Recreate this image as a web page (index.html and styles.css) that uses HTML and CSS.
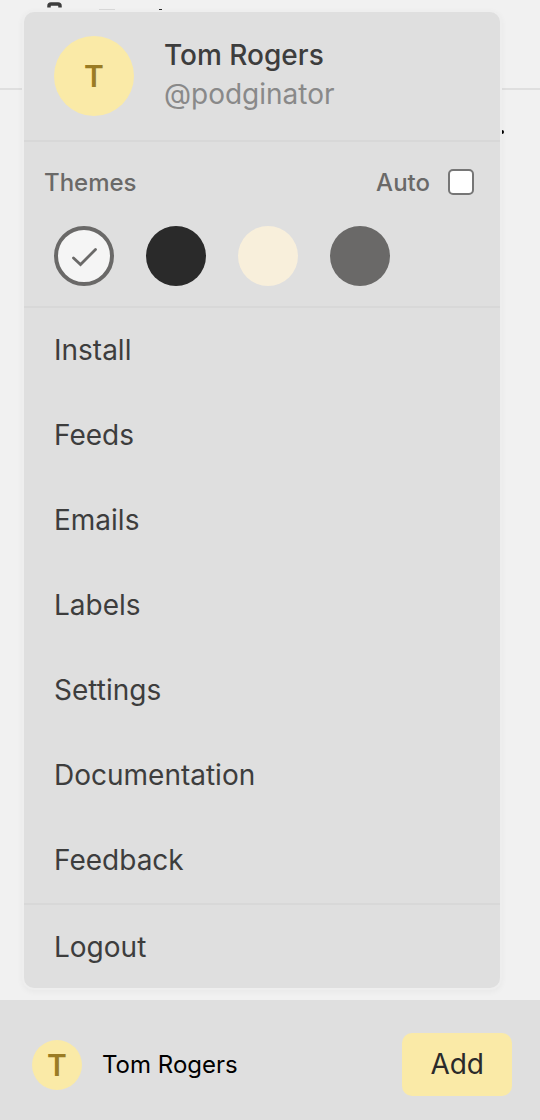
FILE: index.html
```html
<!DOCTYPE html>
<html lang="en">
<head>
<meta charset="utf-8">
<meta name="viewport" content="width=device-width, initial-scale=1">
<title>Account menu</title>
<link rel="stylesheet" href="styles.css">
</head>
<body>
<header class="topbar">
  <svg class="topbar-art" width="140" height="24" viewBox="0 0 140 24" aria-hidden="true">
    <path d="M2 7.500V6Q2 4 4 4H11Q13 4 13 6V7.500" fill="none" stroke="#3d3d3d" stroke-width="3.500"/>
    <path d="M52 9.500H68" stroke="#d9d9d9"/>
    <path d="M112 9.500H115" stroke="#2a2a2a"/>
  </svg>
</header>
<main class="content">
  <svg class="content-mark" width="6" height="6" viewBox="0 0 6 6" aria-hidden="true"><circle cx="3" cy="3" r="2" fill="#000"/></svg>
</main>

<section class="menu" aria-label="Account menu">
  <div class="profile">
    <span class="avatar avatar-large" aria-hidden="true">T</span>
    <div class="identity">
      <div class="name">Tom Rogers</div>
      <div class="handle">@podginator</div>
    </div>
  </div>
  <div class="themes">
    <div class="themes-head">
      <span>Themes</span>
      <label class="auto" for="auto">Auto <input class="auto-box" type="checkbox" id="auto"></label>
    </div>
    <div class="swatches">
      <button class="swatch swatch-light" type="button" aria-label="Light" aria-pressed="true">
        <svg width="28" height="28" viewBox="0 0 28 28" aria-hidden="true"><path d="M3.500 16L10.500 22.500L25.500 7.500" fill="none" stroke="#6a6968" stroke-width="2.800" stroke-linecap="round"/></svg>
      </button>
      <button class="swatch swatch-dark" type="button" aria-label="Dark"></button>
      <button class="swatch swatch-sepia" type="button" aria-label="Sepia"></button>
      <button class="swatch swatch-gray" type="button" aria-label="Gray"></button>
    </div>
  </div>
  <nav class="links">
    <a class="link" href="#install">Install</a>
    <a class="link" href="#feeds">Feeds</a>
    <a class="link" href="#emails">Emails</a>
    <a class="link" href="#labels">Labels</a>
    <a class="link" href="#settings">Settings</a>
    <a class="link" href="#documentation">Documentation</a>
    <a class="link" href="#feedback">Feedback</a>
  </nav>
  <button class="link logout" type="button">Logout</button>
</section>

<footer class="footer">
  <button class="account" type="button">
    <span class="avatar avatar-small" aria-hidden="true">T</span>
    <span>Tom Rogers</span>
  </button>
  <button class="add" type="button">Add</button>
</footer>
</body>
</html>
```
FILE: styles.css
```css
* {
  box-sizing: border-box;
}

body {
  position: relative;
  display: flex;
  flex-direction: column;
  min-height: 100vh;
  margin: 0;
  background: #f1f1f1;
  color: #3d3d3d;
  font-family: Inter, "Liberation Sans", sans-serif;
}

button {
  padding: 0;
  border: 0;
  background: none;
  color: inherit;
  font: inherit;
  cursor: pointer;
}

.topbar {
  height: 90px;
  padding-left: 47px;
  border-bottom: 2px solid #dfdfdf;
}

.topbar-art {
  display: block;
}

.content {
  display: flex;
  flex: 1;
  justify-content: flex-end;
  min-height: 910px;
  padding: 39px 35px 0;
}

.menu {
  position: absolute;
  top: 10px;
  right: 38px;
  left: 22px;
  border: 2px solid #eeeeee;
  border-radius: 12px;
  background: #dfdfdf;
  box-shadow: 0 2px 6px rgba(0, 0, 0, 0.04);
}

.profile {
  display: flex;
  align-items: center;
  gap: 30px;
  padding: 24px 30px;
  border-bottom: 2px solid #d8d8d8;
}

.avatar {
  display: flex;
  flex: none;
  align-items: center;
  justify-content: center;
  border-radius: 50%;
  background: #faeaa7;
  color: #9a7c24;
  font-size: 30px;
  font-weight: 600;
}

.avatar-large {
  width: 80px;
  height: 80px;
}

.avatar-small {
  width: 50px;
  height: 50px;
}

.identity {
  padding-bottom: 2px;
  font-size: 28px;
  line-height: 40px;
}

.profile .identity {
  line-height: 39px;
}

.name {
  font-weight: 500;
}

.handle {
  color: #898989;
}

.themes {
  padding: 27px 26px 20px 20px;
  border-bottom: 2px solid #d8d8d8;
}

.themes-head {
  display: flex;
  align-items: center;
  justify-content: space-between;
  color: #6a6968;
  font-size: 24px;
  font-weight: 500;
  line-height: 28px;
}

.auto {
  display: flex;
  align-items: center;
  gap: 18px;
}

.auto-box {
  width: 26px;
  height: 26px;
  margin: 0 0 2px;
  border: 2px solid #767676;
  border-radius: 5px;
  background: #fff;
  appearance: none;
}

.auto-box:checked {
  background: #6a6968;
}

.swatches {
  display: flex;
  gap: 32px;
  padding: 29px 10px 0;
}

.swatch {
  display: flex;
  align-items: center;
  justify-content: center;
  width: 60px;
  height: 60px;
  border-radius: 50%;
}

.swatch-light {
  border: 4px solid #6a6968;
  background: #f5f5f5;
}

.swatch-dark {
  background: #2a2a2a;
}

.swatch-sepia {
  background: #f8efdb;
}

.swatch-gray {
  background: #6a6968;
}

.links {
  border-bottom: 2px solid #d8d8d8;
}

.link {
  display: block;
  width: 100%;
  padding: 25px 30px;
  color: #3d3d3d;
  font-size: 28px;
  line-height: 35px;
  text-align: left;
  text-decoration: none;
}

.logout {
  padding-bottom: 23px;
}

.footer {
  display: flex;
  align-items: center;
  justify-content: space-between;
  padding: 33px 28px 24px 32px;
  background: #dfdfdf;
}

.account {
  display: flex;
  align-items: center;
  gap: 20px;
  color: #000;
  font-size: 24px;
}

.add {
  padding: 14px 28px;
  border-radius: 10px;
  background: #faeaa7;
  color: #2a2a2a;
  font-size: 28px;
  line-height: 35px;
}
```
